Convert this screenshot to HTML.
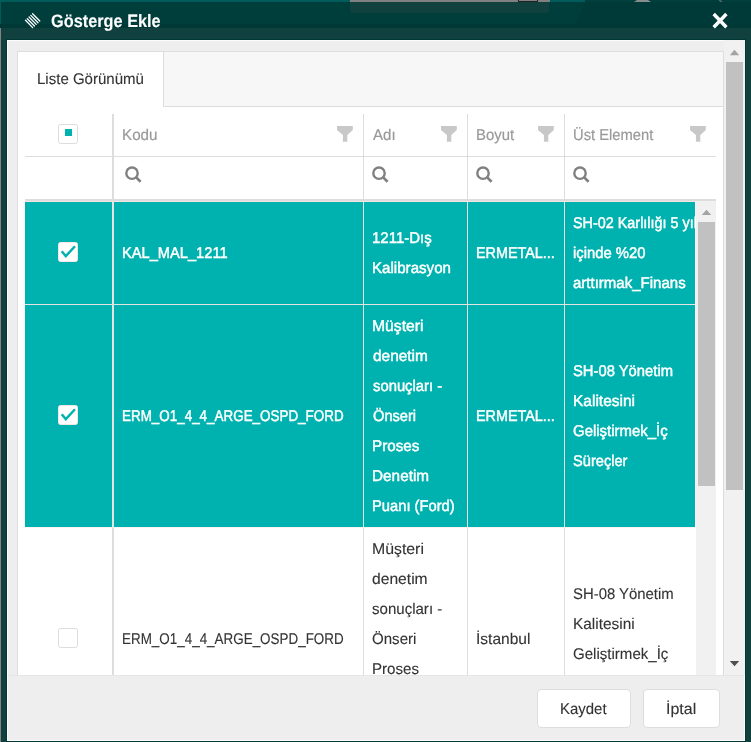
<!DOCTYPE html>
<html lang="tr">
<head>
<meta charset="utf-8">
<title>Gösterge Ekle</title>
<style>
*{box-sizing:border-box;margin:0;padding:0}
html,body{width:751px;height:742px;overflow:hidden}
body{position:relative;background:#11413f;font-family:"Liberation Sans",sans-serif;font-size:15px;color:#333}
.abs{position:absolute}
.t{position:absolute;white-space:nowrap;line-height:21px;text-rendering:geometricPrecision;transform-origin:0 50%;display:block}
/* underlying page bits seen through the overlay */
#bgtop{left:0;top:0;width:751px;height:28px;background:#003a38}
#bgtopl{left:0;top:0;width:590px;height:28px;background:#003e3c;clip-path:polygon(0 0,586px 0,574px 28px,0 28px)}
#bgtop2{left:0;top:24px;width:751px;height:4px;background:#003836}
#strip{left:0;top:0;width:751px;height:2px;background:#005b5b}
#stripr{left:585px;top:0;width:166px;height:2px;background:#003f3d}
#sgray{left:350px;top:0;width:200px;height:2px;background:#808080}
#sbox{left:350px;top:2px;width:199px;height:11px;background:#11413f;border-radius:0 0 4px 4px}
#ssq{left:517.7px;top:-5px;width:20.3px;height:7px;border:1.6px solid #1e2222}
#stri{left:634px;top:0;width:17px;height:2px;background:#878c8c;clip-path:polygon(3px 0,14px 0,17px 2px,0 2px)}
#smark{left:718.5px;top:0;width:4px;height:2px;background:#6f7a7a;clip-path:polygon(0 0,1.6px 0,4px 2px,2.4px 2px)}
#ledge{left:0;top:28px;width:1px;height:714px;background:#868281}
#ledge2{left:0;top:2px;width:1px;height:22px;background:#005b5b}
#ticon{left:20px;top:8px;width:30px;height:26px}
#close{left:710px;top:10px;width:20px;height:22px}
/* dialog content */
#outline{left:6px;top:39px;width:740px;height:703px;background:#003835}
#content{left:7px;top:40px;width:738px;height:701px;background:#eee;border:1px solid #fdfcfc}
#footline{left:8px;top:675px;width:736px;height:1px;background:#e6e6e6}
.btn{height:39px;top:689px;background:#fff;border:1px solid #ddd;border-radius:4px}
#oscroll{left:724px;top:40px;width:21px;height:635px;background:#f1f1f1}
#othumb{left:726px;top:62px;width:17px;height:428px;background:#c1c1c1}
.arr{width:0;height:0;border-left:4.7px solid transparent;border-right:4.7px solid transparent}
#panel{left:17px;top:51px;width:707px;height:624px;background:#fff;border:1px solid #ddd;border-bottom:none}
#tabstrip{left:18px;top:52px;width:705px;height:55px;background:#f7f7f7;border-bottom:1px solid #ddd}
#tab{left:18px;top:52px;width:146px;height:55px;background:#fff;border-right:1px solid #ddd}
#grid{left:25px;top:114px;width:691px;height:561px;overflow:hidden}
.vl{background:#ddd;width:1px}
.hl{background:#ddd;height:1px}
.row{left:0;width:670px;overflow:hidden}
.sel{background:#00b2af}
.cb{position:absolute;left:33px;width:20px;height:20px;background:#fff;border:1px solid #ddd;border-radius:2.5px}
.sel .cb{border-color:#f5e6e4}
.svl{position:absolute;top:0;bottom:0;width:1px;background:#e6e4e2}
#iscroll{left:671px;top:87px;width:20px;height:474px;background:#f1f1f1}
#ithumb{left:673px;top:108px;width:17px;height:264px;background:#c1c1c1}
#clip{left:0;top:0;width:751px;height:675px;overflow:hidden;will-change:transform}
#clip2{left:0;top:0;width:751px;height:742px;will-change:transform}
</style>
</head>
<body>
<div class="abs" id="bgtop"></div>
<div class="abs" id="bgtopl"></div>
<div class="abs" id="bgtop2"></div>
<div class="abs" id="strip"></div>
<div class="abs" id="stripr"></div>
<div class="abs" id="sgray"></div>
<div class="abs" id="sbox"></div>
<div class="abs" id="ssq"></div>
<div class="abs" id="stri"></div>
<div class="abs" id="smark"></div>
<div class="abs" id="ledge"></div>
<div class="abs" id="ledge2"></div>
<svg class="abs" id="ticon" viewBox="0 0 30 26"><g stroke="#fff" stroke-width="1.3" fill="none" stroke-linecap="round"><path d="M5.50 12.30 L12.70 19.60"/><path d="M7.27 10.67 L14.47 17.97"/><path d="M9.04 9.04 L16.24 16.34"/><path d="M10.81 7.41 L18.01 14.71"/><path d="M12.58 5.78 L19.78 13.08"/></g></svg>
<svg class="abs" id="close" viewBox="0 0 20 22"><path d="M3.7 4 L16.4 17.2 M16.4 4 L3.7 17.2" stroke="#fff" stroke-width="3.4" fill="none"/></svg>

<div class="abs" id="outline"></div>
<div class="abs" id="content"></div>
<div class="abs" id="footline"></div>
<div class="abs btn" style="left:537px;width:94px"></div>
<div class="abs btn" style="left:643px;width:77px"></div>

<div class="abs" id="oscroll"></div>
<svg class="abs" style="left:724px;top:45px" width="21" height="14" viewBox="0 0 21 14"><path d="M10.5 4.8 L15.2 10.2 H5.8 Z" fill="#a3a3a3"/></svg>
<div class="abs" id="othumb"></div>
<svg class="abs" style="left:724px;top:656px" width="21" height="14" viewBox="0 0 21 14"><path d="M5.8 5 H15.2 L10.5 10.2 Z" fill="#505050"/></svg>

<div class="abs" id="panel"></div>
<div class="abs" id="tabstrip"></div>
<div class="abs" id="tab"></div>

<div class="abs" id="grid">
  <div class="abs cb" style="top:10px"><div class="abs" style="left:6px;top:3.5px;width:7px;height:7.5px;background:#00b2af"></div></div>
  <svg class="abs" style="left:312.3px;top:12px" width="16" height="16" viewBox="0 0 16 16"><path d="M0 0.1 H15.8 V4.1 L10.3 8.9 V15.8 H5.9 V8.9 L0 4.1 Z" fill="#c8c8c8"/></svg>
<svg class="abs" style="left:416.3px;top:12px" width="16" height="16" viewBox="0 0 16 16"><path d="M0 0.1 H15.8 V4.1 L10.3 8.9 V15.8 H5.9 V8.9 L0 4.1 Z" fill="#c8c8c8"/></svg>
<svg class="abs" style="left:513.2px;top:12px" width="16" height="16" viewBox="0 0 16 16"><path d="M0 0.1 H15.8 V4.1 L10.3 8.9 V15.8 H5.9 V8.9 L0 4.1 Z" fill="#c8c8c8"/></svg>
<svg class="abs" style="left:664.8px;top:12px" width="16" height="16" viewBox="0 0 16 16"><path d="M0 0.1 H15.8 V4.1 L10.3 8.9 V15.8 H5.9 V8.9 L0 4.1 Z" fill="#c8c8c8"/></svg>

  <div class="abs hl" style="left:0;top:42px;width:691px"></div>
  <svg class="abs" style="left:99.65px;top:52px" width="18" height="18" viewBox="0 0 18 18"><circle cx="7" cy="7.2" r="5.7" stroke="#808080" stroke-width="2.4" fill="none"/><path d="M11.4 11.6 L15.6 15.8" stroke="#808080" stroke-width="2.7"/></svg>
<svg class="abs" style="left:347.10px;top:52px" width="18" height="18" viewBox="0 0 18 18"><circle cx="7" cy="7.2" r="5.7" stroke="#808080" stroke-width="2.4" fill="none"/><path d="M11.4 11.6 L15.6 15.8" stroke="#808080" stroke-width="2.7"/></svg>
<svg class="abs" style="left:451.40px;top:52px" width="18" height="18" viewBox="0 0 18 18"><circle cx="7" cy="7.2" r="5.7" stroke="#808080" stroke-width="2.4" fill="none"/><path d="M11.4 11.6 L15.6 15.8" stroke="#808080" stroke-width="2.7"/></svg>
<svg class="abs" style="left:548.30px;top:52px" width="18" height="18" viewBox="0 0 18 18"><circle cx="7" cy="7.2" r="5.7" stroke="#808080" stroke-width="2.4" fill="none"/><path d="M11.4 11.6 L15.6 15.8" stroke="#808080" stroke-width="2.7"/></svg>

  <div class="abs vl" style="left:87px;top:0;height:87px;width:2px"></div>
  <div class="abs vl" style="left:338px;top:0;height:87px"></div>
  <div class="abs vl" style="left:442px;top:0;height:87px"></div>
  <div class="abs vl" style="left:539px;top:0;height:87px"></div>
  <div class="abs hl" style="left:0;top:85px;width:691px;height:2px"></div>

  <div class="abs row" style="top:87px;height:1px;background:#f5e6e4"></div>
  <div class="abs row sel" style="top:88px;height:102px">
    <div class="cb" style="top:40px"><svg width="18" height="18" viewBox="0 0 18 18" style="position:absolute;left:0;top:0"><path d="M2.7 8.3 L6.8 13.1 L16 3.3" stroke="#00b2af" stroke-width="2.4" fill="none"/></svg></div>
    <div class="svl" style="left:87px;width:2px"></div><div class="svl" style="left:338px"></div><div class="svl" style="left:442px"></div><div class="svl" style="left:539px"></div>
  </div>
  <div class="abs row" style="top:190px;height:1px;background:#e6e4e2"></div>
  <div class="abs row sel" style="top:191px;height:222px">
    <div class="cb" style="top:100px"><svg width="18" height="18" viewBox="0 0 18 18" style="position:absolute;left:0;top:0"><path d="M2.7 8.3 L6.8 13.1 L16 3.3" stroke="#00b2af" stroke-width="2.4" fill="none"/></svg></div>
    <div class="svl" style="left:87px;width:2px"></div><div class="svl" style="left:338px"></div><div class="svl" style="left:442px"></div><div class="svl" style="left:539px"></div>
  </div>
  <div class="abs row" style="top:413px;height:1px;background:#fbf3f2"></div>
  <div class="abs row" style="top:414px;height:223px;background:#fff">
    <div class="cb" style="top:100px"></div>
    <div class="abs vl" style="left:87px;top:0;height:223px;width:2px"></div>
    <div class="abs vl" style="left:338px;top:0;height:223px"></div>
    <div class="abs vl" style="left:442px;top:0;height:223px"></div>
    <div class="abs vl" style="left:539px;top:0;height:223px"></div>
  </div>
  <div class="abs" id="iscroll"></div>
  <svg class="abs" style="left:671px;top:91px" width="20" height="14" viewBox="0 0 20 14"><path d="M10.5 4.8 L15.2 10 H5.8 Z" fill="#a3a3a3"/></svg>
  <div class="abs" id="ithumb"></div>
</div>
<div class="abs" id="clip">
<span class="t" style="left:50.50px;top:11px;color:#fff;font-size:18px;transform:scaleX(0.9061);-webkit-text-stroke:0.1px #fff;font-weight:bold">Gösterge Ekle</span>
<span class="t" style="left:37.24px;top:69px;color:#333;font-size:15.5px;transform:scaleX(0.9695);-webkit-text-stroke:0.12px #333">Liste Görünümü</span>
<span class="t" style="left:121.92px;top:125px;color:#999;font-size:15.5px;transform:scaleX(0.9804);-webkit-text-stroke:0.2px #999">Kodu</span>
<span class="t" style="left:373.36px;top:125px;color:#999;font-size:15.5px;transform:scaleX(0.9699);-webkit-text-stroke:0.2px #999">Adı</span>
<span class="t" style="left:475.78px;top:125px;color:#999;font-size:15.5px;transform:scaleX(0.9613);-webkit-text-stroke:0.2px #999">Boyut</span>
<span class="t" style="left:572.65px;top:125px;color:#999;font-size:15.5px;transform:scaleX(0.9511);-webkit-text-stroke:0.2px #999">Üst Element</span>
<span class="t" style="left:122.34px;top:243px;color:#fff;font-size:15.5px;transform:scaleX(0.9449);-webkit-text-stroke:0.45px #fff">KAL_MAL_1211</span>
<span class="t" style="left:371.68px;top:228px;color:#fff;font-size:15.5px;transform:scaleX(0.9680);-webkit-text-stroke:0.45px #fff">1211-Dış</span>
<span class="t" style="left:371.66px;top:258px;color:#fff;font-size:15.5px;transform:scaleX(0.9750);-webkit-text-stroke:0.45px #fff">Kalibrasyon</span>
<span class="t" style="left:475.67px;top:243px;color:#fff;font-size:15.5px;transform:scaleX(0.9278);-webkit-text-stroke:0.45px #fff">ERMETAL...</span>
<div class="abs" style="left:0;top:0;width:695.5px;height:742px;overflow:hidden"><span class="t" style="left:573.00px;top:213px;color:#fff;font-size:15.5px;transform:scaleX(0.9280);-webkit-text-stroke:0.45px #fff">SH-02 Karlılığı 5 yıl</span></div>
<span class="t" style="left:572.92px;top:243px;color:#fff;font-size:15.5px;transform:scaleX(0.9565);-webkit-text-stroke:0.45px #fff">içinde %20</span>
<span class="t" style="left:573.34px;top:273px;color:#fff;font-size:15.5px;transform:scaleX(0.9686);-webkit-text-stroke:0.45px #fff">arttırmak_Finans</span>
<span class="t" style="left:121.79px;top:406px;color:#fff;font-size:15.5px;transform:scaleX(0.8662);-webkit-text-stroke:0.45px #fff">ERM_O1_4_4_ARGE_OSPD_FORD</span>
<span class="t" style="left:371.79px;top:316px;color:#fff;font-size:15.5px;transform:scaleX(1.0128);-webkit-text-stroke:0.45px #fff">Müşteri</span>
<span class="t" style="left:372.80px;top:346px;color:#fff;font-size:15.5px;transform:scaleX(0.9957);-webkit-text-stroke:0.45px #fff">denetim</span>
<span class="t" style="left:372.80px;top:376px;color:#fff;font-size:15.5px;transform:scaleX(0.9557);-webkit-text-stroke:0.45px #fff">sonuçları -</span>
<span class="t" style="left:372.80px;top:406px;color:#fff;font-size:15.5px;transform:scaleX(0.9445);-webkit-text-stroke:0.45px #fff">Önseri</span>
<span class="t" style="left:371.65px;top:436px;color:#fff;font-size:15.5px;transform:scaleX(0.9829);-webkit-text-stroke:0.45px #fff">Proses</span>
<span class="t" style="left:371.74px;top:466px;color:#fff;font-size:15.5px;transform:scaleX(0.9897);-webkit-text-stroke:0.45px #fff">Denetim</span>
<span class="t" style="left:371.69px;top:496px;color:#fff;font-size:15.5px;transform:scaleX(0.9496);-webkit-text-stroke:0.45px #fff">Puanı (Ford)</span>
<span class="t" style="left:475.67px;top:406px;color:#fff;font-size:15.5px;transform:scaleX(0.9278);-webkit-text-stroke:0.45px #fff">ERMETAL...</span>
<span class="t" style="left:573.24px;top:361px;color:#fff;font-size:15.5px;transform:scaleX(0.9539);-webkit-text-stroke:0.45px #fff">SH-08 Yönetim</span>
<span class="t" style="left:572.74px;top:391px;color:#fff;font-size:15.5px;transform:scaleX(0.9992);-webkit-text-stroke:0.45px #fff">Kalitesini</span>
<span class="t" style="left:573.24px;top:421px;color:#fff;font-size:15.5px;transform:scaleX(0.9647);-webkit-text-stroke:0.45px #fff">Geliştirmek_İç</span>
<span class="t" style="left:573.06px;top:451px;color:#fff;font-size:15.5px;transform:scaleX(0.9431);-webkit-text-stroke:0.45px #fff">Süreçler</span>
<span class="t" style="left:121.77px;top:629px;color:#333;font-size:15.5px;transform:scaleX(0.8665);-webkit-text-stroke:0.12px #333">ERM_O1_4_4_ARGE_OSPD_FORD</span>
<span class="t" style="left:371.51px;top:539px;color:#333;font-size:15.5px;transform:scaleX(1.0216);-webkit-text-stroke:0.12px #333">Müşteri</span>
<span class="t" style="left:372.40px;top:569px;color:#333;font-size:15.5px;transform:scaleX(1.0088);-webkit-text-stroke:0.12px #333">denetim</span>
<span class="t" style="left:372.17px;top:599px;color:#333;font-size:15.5px;transform:scaleX(0.9709);-webkit-text-stroke:0.12px #333">sonuçları -</span>
<span class="t" style="left:372.44px;top:629px;color:#333;font-size:15.5px;transform:scaleX(0.9727);-webkit-text-stroke:0.12px #333">Önseri</span>
<span class="t" style="left:371.83px;top:659px;color:#333;font-size:15.5px;transform:scaleX(0.9749);-webkit-text-stroke:0.12px #333">Proses</span>
<span class="t" style="left:371.81px;top:689px;color:#333;font-size:15.5px;transform:scaleX(0.9945);-webkit-text-stroke:0.12px #333">Denetim</span>
<span class="t" style="left:371.85px;top:719px;color:#333;font-size:15.5px;transform:scaleX(0.9459);-webkit-text-stroke:0.12px #333">Puanı (Ford)</span>
<span class="t" style="left:476.46px;top:629px;color:#333;font-size:15.5px;transform:scaleX(1.0010);-webkit-text-stroke:0.12px #333">İstanbul</span>
<span class="t" style="left:572.80px;top:584px;color:#333;font-size:15.5px;transform:scaleX(0.9607);-webkit-text-stroke:0.12px #333">SH-08 Yönetim</span>
<span class="t" style="left:572.70px;top:614px;color:#333;font-size:15.5px;transform:scaleX(0.9953);-webkit-text-stroke:0.12px #333">Kalitesini</span>
<span class="t" style="left:573.11px;top:644px;color:#333;font-size:15.5px;transform:scaleX(0.9712);-webkit-text-stroke:0.12px #333">Geliştirmek_İç</span>
<span class="t" style="left:573.70px;top:674px;color:#333;font-size:15.5px;transform:scaleX(0.9365);-webkit-text-stroke:0.12px #333">Süreçler</span>
</div>
<div class="abs" id="clip2"><span class="t" style="left:560.28px;top:699px;color:#333;font-size:15.5px;transform:scaleX(0.9643);-webkit-text-stroke:0.12px #333">Kaydet</span>
<span class="t" style="left:666.42px;top:699px;color:#333;font-size:15.5px;transform:scaleX(1.0317);-webkit-text-stroke:0.12px #333">İptal</span></div>
</body>
</html>
